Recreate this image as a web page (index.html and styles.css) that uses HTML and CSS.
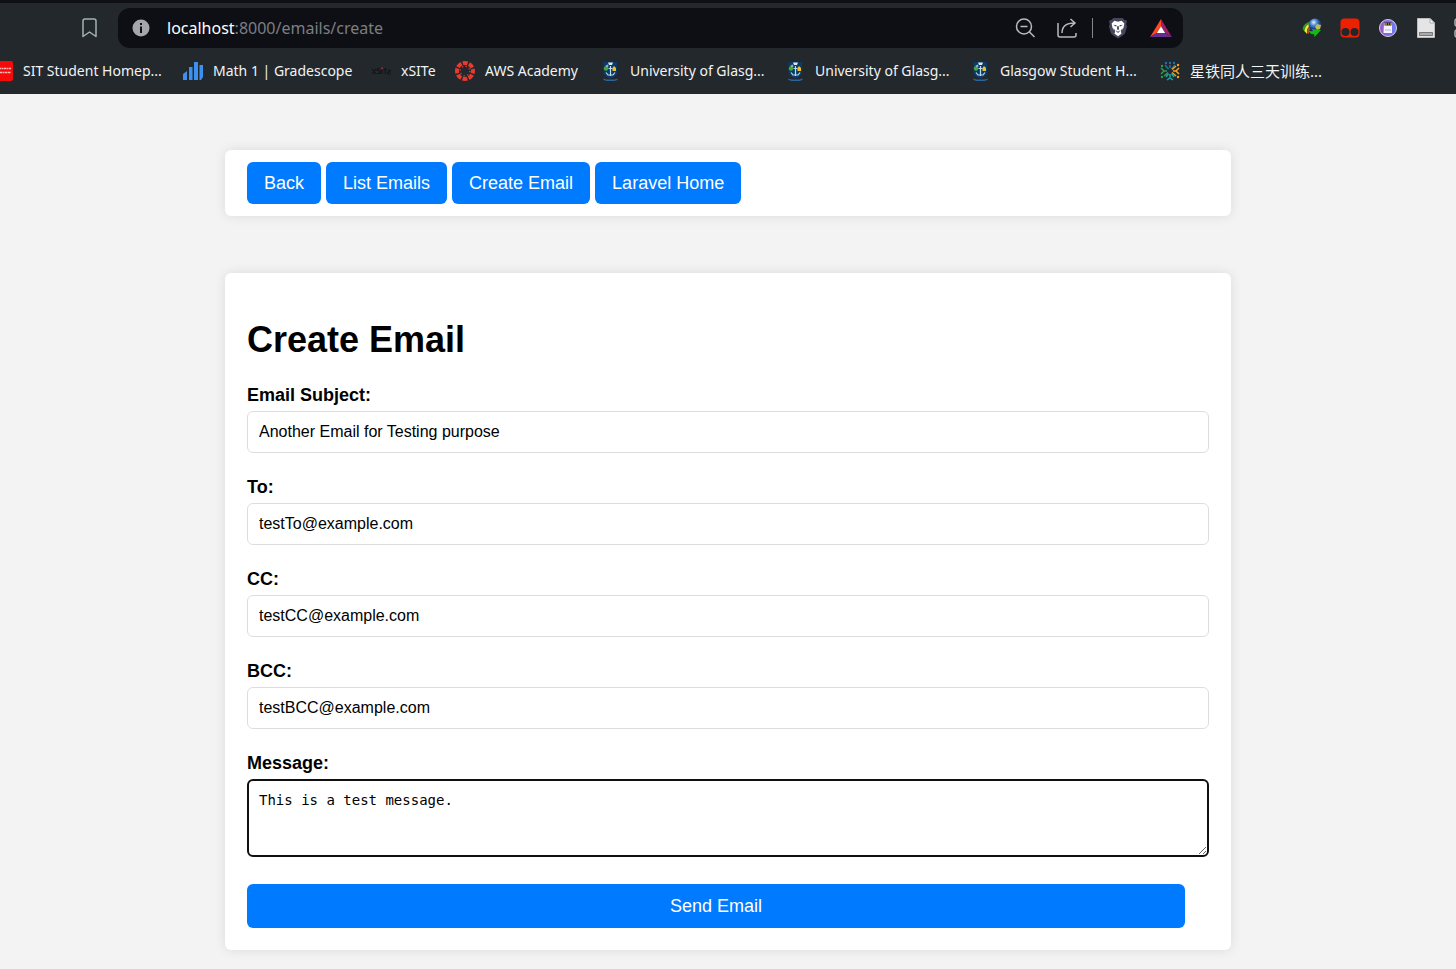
FILE: index.html
```html
<!DOCTYPE html>
<html lang="en">
<head>
<meta charset="utf-8">
<title>Create Email</title>
<link rel="stylesheet" href="styles.css">
</head>
<body>
<svg class="defs" aria-hidden="true">
  <symbol id="crest" viewBox="0 0 20 20">
    <path d="M3.500 1H17v10c0 3-2 5-6.500 6.500C6 16 3.500 14 3.500 11z" fill="#0a3a6c"/>
    <path d="M8 1.500h5l-1 2.500H9z" fill="#dce8ee"/>
    <circle cx="6" cy="7.500" r="2.200" fill="#4ba82e"/>
    <path d="M5.500 4.500L8 3.500l.5 2-2 1z" fill="#8cb5c8"/>
    <path d="M14 5l2 2v3h-3.500V7z" fill="#f2c11d"/>
    <path d="M10.500 5v10M8.500 7.500h4M6 11.500l2 2.500h5l2-2.500" fill="none" stroke="#b9dced" stroke-width="1.200"/>
    <path d="M3.500 17.500l3 1h8l3-1v1.500l-3 1h-8l-3-1z" fill="#2b659b"/>
  </symbol>
</svg>
<header class="browser">
  <div class="toolbar">
    <button class="icon-button" aria-label="Bookmark this page">
      <svg class="icon" viewBox="0 0 20 20"><path d="M4 3q0-2 2-2h9q2 0 2 2v15.500l-6.500-4.500L4 18.500z" fill="none" stroke="#a5b1b8" stroke-width="1.500" stroke-linejoin="round"/></svg>
    </button>
    <div class="address">
      <svg class="info" viewBox="0 0 18 18"><circle cx="9" cy="9" r="8.500" fill="#a3a6ad"/><path d="M8 4h2v2H8zM8 7.500h2V14H8z" fill="#0e0f15"/></svg>
      <div class="url"><span class="host">localhost</span>:8000/emails/create</div>
      <div class="tools">
        <button class="icon-button" aria-label="Zoom out"><svg class="icon" viewBox="0 0 20 20"><g fill="none" stroke="#b8babd" stroke-width="1.500"><circle cx="9" cy="8.500" r="7.500"/><path d="M5.500 8.500h7M14.500 14l5 5"/></g></svg></button>
        <button class="icon-button" aria-label="Share"><svg class="icon" viewBox="0 0 20 20"><path d="M1 5v12q0 2 2 2h14q2 0 2-2v-2M5 15c0-6 3-10 12.500-10M13.500 1l4.500 4-4.500 4" fill="none" stroke="#b8babd" stroke-width="1.500"/></svg></button>
        <span class="separator"></span>
        <button class="icon-button" aria-label="Shields"><svg class="icon shield" viewBox="0 0 22 24"><path d="M6 1h10l2 2 3 1-1 4 1 2-2 7q-1 3-8 6.500Q4 20 3 17L1 10l1-2-1-4 3-1z" fill="#45465c"/><path d="M7 4l4 1 4-1 3 3-1 5-3 4 1 2-4 3-4-3 1-2-3-4-1-5z" fill="#fff"/><path d="M5.500 8.500L9.500 9 9 10.500zM16.500 8.500L12.500 9l.5 1.500zM10 10h2v4h-2zM8.500 14.500l2.500 1.500 2.500-1.500L12 17h-2zM6 12l2 3-1 1zM16 12l-2 3 1 1z" fill="#45465c"/></svg></button>
        <button class="icon-button" aria-label="Rewards"><svg class="icon bat" viewBox="0 0 24 22"><path d="M12 1L0 21l7.500-4.500L12 9z" fill="#ff4724"/><path d="M12 1l12 20-7.500-4.500L12 9z" fill="#9e1f63"/><path d="M0 21h24l-7.500-4.500h-9z" fill="#662d91"/><path d="M12 9l4.500 7.500h-9z" fill="#fff"/></svg></button>
      </div>
    </div>
    <div class="extensions">
      <svg class="icon" viewBox="0 0 20 20"><defs><radialGradient id="globe" cx=".4" cy=".3"><stop offset="0" stop-color="#e6f3ff"/><stop offset=".5" stop-color="#4c87d4"/><stop offset="1" stop-color="#173c85"/></radialGradient></defs><path d="M10 3Q1 5 .5 11L3 14Q4 8 10 3z" fill="#2d9c25"/><path d="M9 5Q3 7 2.500 13L5 16Q4 10 10 6z" fill="#f3e733"/><path d="M9 7q-4 3-4 8l2 1q-1-4 4-7z" fill="#ce3d20"/><circle cx="13" cy="7" r="6.500" fill="url(#globe)"/><path d="M15 6l4 1-1 4-3 1-2-3z" fill="#c2bd4d"/><path d="M6 12q2 2 5 1l-1-2 9 1-6.500 7-.5-3q-4 1-6-4z" fill="#16b718"/></svg>
      <svg class="icon" viewBox="0 0 20 20"><rect x=".5" y=".5" width="19" height="19" rx="4" fill="#ed2100"/><circle cx="5.500" cy="14" r="4" fill="#23272b"/><circle cx="14.500" cy="14" r="4" fill="#23272b"/></svg>
      <svg class="icon" viewBox="0 0 20 20"><defs><linearGradient id="ring"><stop stop-color="#9c58c4"/><stop offset="1" stop-color="#6580f4"/></linearGradient></defs><circle cx="10" cy="10" r="8.500" fill="url(#ring)" stroke="#d6ccdd"/><path d="M6 5h8v10H5.500z" fill="#f4f2ff"/><path d="M6.500 4.500h7v3h-7z" fill="#28242b"/><path d="M7 6h2m1 0h1m1 0h1" stroke="#ffc83e"/><path d="M7 12h6" stroke="#b9b5d4"/></svg>
      <svg class="icon" viewBox="0 0 20 20"><path d="M1.500.5H14L18.500 5v14.500h-17z" fill="#e5e5e5" stroke="#bcbcbc"/><path d="M14 .5V5h4.500z" fill="#fff" stroke="#aaa"/><path d="M3.500 14.500h13v3h-13z" fill="#aaa" stroke="#777"/></svg>
      <svg class="icon" viewBox="0 0 20 20"><g fill="none" stroke="#a5b1b8" stroke-width="1.500"><rect x="1" y="1" width="7" height="7" rx="2"/><rect x="1" y="12" width="7" height="7" rx="2"/></g></svg>
    </div>
  </div>
  <nav class="bookmarks" aria-label="Bookmarks">
    <a href="#"><svg class="icon" viewBox="0 0 20 20"><rect width="20" height="20" rx="2" fill="#f60b0b"/><path d="M5 7.500h3m.5 0h2m.5 0h2m.5 0h2m.5 0h2M6 11.500h3m.5 0h2m.5 0h2m.5 0h3" stroke="#ffb9b9" stroke-width="1.500"/></svg>SIT Student Homep...</a>
    <a href="#"><svg class="icon" viewBox="0 0 20 20"><path d="M0 13l4-3v9H0zM6 6h3.500v13H6zM11 1h4v18h-4zM16.500 4H20v12l-2 3h-1.500z" fill="#3c91f0"/></svg>Math 1 | Gradescope</a>
    <a href="#"><svg class="icon" viewBox="0 0 20 20"><path d="M1 8l4 5m0-5l-4 5M9 7.500H6.500v2H9v3H6M11 9v4M12.500 8H16m-1.700 0v5M19.500 11H17v2h2.500M17 9h2v2" fill="none" stroke="#111518" stroke-width="1.200"/><path d="M10.500 6.500h1.500V8h-1.500z" fill="#9b3c35"/></svg>xSITe</a>
    <a href="#"><svg class="icon" viewBox="0 0 20 20"><circle cx="10" cy="10" r="8" fill="none" stroke="#e63b2e" stroke-width="4" stroke-dasharray="4.800 1.483" stroke-dashoffset="2.400"/><circle cx="10" cy="10" r="4.800" fill="none" stroke="#e63b2e" stroke-width="1.300" stroke-dasharray="1.300 2.470"/></svg>AWS Academy</a>
    <a href="#"><svg class="icon"><use href="#crest"/></svg>University of Glasg...</a>
    <a href="#"><svg class="icon"><use href="#crest"/></svg>University of Glasg...</a>
    <a href="#"><svg class="icon"><use href="#crest"/></svg>Glasgow Student H...</a>
    <a class="cjk" href="#" lang="zh"><svg class="icon" viewBox="0 0 20 20"><g fill="none" stroke-width="1.500"><g stroke="#1675b7"><path d="M10 7V4M8.500 8L5 4M11.500 8L15 4"/></g><g stroke="#2a9b4f"><path d="M7 10H4M8 11.500L4 15M1 7l3 3-3 3"/></g><g stroke="#f6a323"><path d="M13 10h3M12 8.500L16 5M12 11.500L16 15M19 7l-3 3 3 3"/></g><g stroke="#19a6a0"><path d="M10 13v3M8.500 12.500L6 16M11.500 12.500L14 16M7 19l3-2 3 2"/></g></g><g fill="#1675b7"><circle cx="6" cy="2" r="1.200"/><circle cx="10" cy="2" r="1.200"/><circle cx="14" cy="2" r="1.200"/></g><g fill="#2a9b4f"><circle cx="2" cy="5" r="1.200"/><circle cx="2" cy="16" r="1.200"/></g><g fill="#f6a323"><circle cx="18" cy="4" r="1.200"/><circle cx="18" cy="16" r="1.200"/></g></svg>星铁同人三天训练...</a>
  </nav>
</header>
<main class="page">
  <nav class="card menu">
    <a class="button" href="#">Back</a>
    <a class="button" href="#">List Emails</a>
    <a class="button" href="#">Create Email</a>
    <a class="button" href="#">Laravel Home</a>
  </nav>
  <section class="card compose">
    <h1>Create Email</h1>
    <form>
      <div class="field"><label for="subject">Email Subject:</label><input id="subject" type="text" value="Another Email for Testing purpose"></div>
      <div class="field"><label for="to">To:</label><input id="to" type="email" value="testTo@example.com"></div>
      <div class="field"><label for="cc">CC:</label><input id="cc" type="email" value="testCC@example.com"></div>
      <div class="field"><label for="bcc">BCC:</label><input id="bcc" type="email" value="testBCC@example.com"></div>
      <div class="field"><label for="message">Message:</label><textarea id="message" rows="3">This is a test message.</textarea></div>
      <button class="button send" type="button">Send Email</button>
    </form>
  </section>
</main>
</body>
</html>
```
FILE: styles.css
```css
* { box-sizing: border-box; }
body {
  margin: 0;
  min-height: 100vh;
  background: #f3f3f3;
  color: #000;
  font: 18px/20px "Liberation Sans", Arial, sans-serif;
}
.defs { position: absolute; width: 0; height: 0; }
.browser {
  height: 94px;
  background: #23282c;
  border-top: 3px solid #0f1016;
  overflow: hidden;
  font-family: "Noto Sans", "Noto Sans CJK SC", sans-serif;
}
.toolbar {
  display: flex;
  align-items: center;
  height: 50px;
  padding-left: 79px;
}
.icon-button {
  display: flex;
  padding: 0;
  border: 0;
  background: none;
}
.icon { display: block; flex: none; width: 20px; height: 20px; }
.shield { width: 20px; height: 22px; }
.bat { width: 22px; height: 20px; }
.address {
  display: flex;
  align-items: center;
  flex: 1;
  height: 40px;
  margin-left: 19px;
  padding: 0 11px 0 14px;
  border-radius: 12px;
  background: #0e0f15;
}
.info { width: 18px; height: 18px; }
.url {
  flex: 1;
  margin-left: 17px;
  color: #7b7e83;
  font-size: 16px;
  line-height: 24px;
}
.host { color: #fff; }
.tools { display: flex; align-items: center; gap: 22px; }
.separator { width: 1px; height: 20px; margin: 0 -7px; background: #85878b; }
.extensions {
  display: flex;
  gap: 18px;
  width: 154px;
  margin-left: 119px;
  overflow: hidden;
}
.bookmarks {
  display: grid;
  grid-template-columns: 190px 188px 84px 145px 185px 185px 190px auto;
  align-items: center;
  height: 36px;
  margin-left: -7px;
}
.bookmarks a {
  display: flex;
  align-items: center;
  gap: 10px;
  color: #f2f3f4;
  font-size: 14px;
  text-decoration: none;
  white-space: nowrap;
}
.bookmarks .cjk { font-size: 15px; }
.page {
  display: grid;
  gap: 57px;
  max-width: 1006px;
  margin: 56px auto 19px;
}
.card {
  border-radius: 6px;
  background: #fff;
  box-shadow: 0 0 12px rgba(0, 0, 0, 0.1);
}
.menu { display: flex; flex-wrap: wrap; gap: 5px; padding: 12px 22px; }
.button {
  padding: 11px 17px;
  border: 0;
  border-radius: 6px;
  background: #007bff;
  color: #fff;
  font: inherit;
  text-decoration: none;
}
.compose { padding: 47px 22px 22px; }
h1 { margin: 0 0 25px; font-size: 36px; line-height: 40px; }
form { display: flex; flex-direction: column; }
.field { display: grid; gap: 6px; margin-bottom: 24px; }
label { font-weight: bold; }
input, textarea {
  width: 100%;
  border: 1px solid #ddd;
  border-radius: 6px;
  background: #fff;
  color: #000;
}
input {
  height: 42px;
  padding: 0 11px;
  font: 16px "Liberation Sans", Arial, sans-serif;
}
textarea {
  display: block;
  height: 78px;
  padding: 9px 10px;
  border: 2px solid #101010;
  font: 14px/20px "DejaVu Sans Mono", monospace;
  resize: vertical;
}
.send { height: 44px; margin: 3px 24px 0 0; }
```
